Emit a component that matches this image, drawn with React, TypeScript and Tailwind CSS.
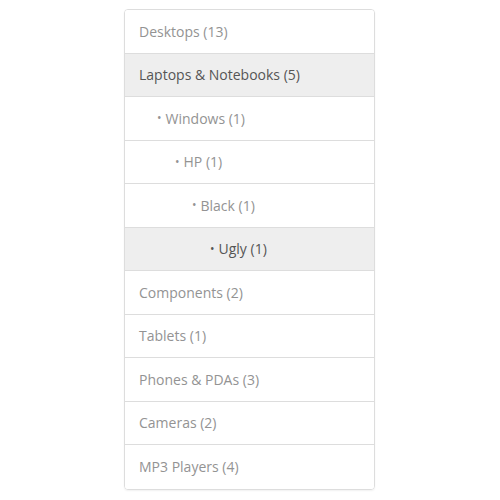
import React from "react";

type Item = { label: string; level: number; active?: boolean };

const items: Item[] = [
  { label: "Desktops (13)", level: 0 },
  { label: "Laptops & Notebooks (5)", level: 0, active: true },
  { label: "Windows (1)", level: 1 },
  { label: "HP (1)", level: 2 },
  { label: "Black (1)", level: 3 },
  { label: "Ugly (1)", level: 4, active: true },
  { label: "Components (2)", level: 0 },
  { label: "Tablets (1)", level: 0 },
  { label: "Phones & PDAs (3)", level: 0 },
  { label: "Cameras (2)", level: 0 },
  { label: "MP3 Players (4)", level: 0 },
];

const pads = ["pl-[14px]", "pl-[32px]", "pl-[50px]", "pl-[67px]", "pl-[85px]"];

export default function App() {
  return (
    <div
      className="w-[500px] h-[500px] bg-white pt-[9px] pl-[124px]"
      style={{ fontFamily: '"Open Sans", sans-serif' }}
    >
      <div className="w-[251px] border border-[#dddddd] rounded-[4px] overflow-hidden shadow-[0_1px_2px_rgba(0,0,0,0.06)]">
        {items.map((it, i) => (
          <div
            key={i}
            className={`h-[43.5px] flex items-center text-[14px] ${pads[it.level]} ${
              i < items.length - 1 ? "border-b border-[#dddddd]" : ""
            } ${it.active ? "bg-[#eeeeee] text-[#555555]" : "bg-white text-[#939393]"}`}
          >
            {it.level > 0 && <span className="text-[12px] mr-[4px]">•</span>}
            <span>{it.label}</span>
          </div>
        ))}
      </div>
    </div>
  );
}
